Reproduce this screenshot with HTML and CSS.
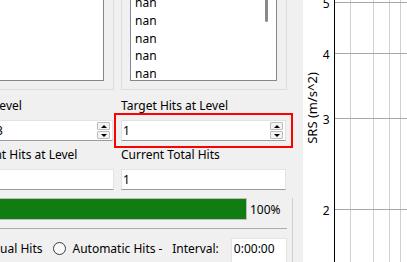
FILE: index.html
```html
<!DOCTYPE html>
<html>

<head>
  <link rel="stylesheet" href="styles.css">
</head>

<body>
  <div class="window">
    <div class="panel">
      <div class="lists">
        <div class="group">
          <div class="listbox"></div>
        </div>
        <div class="group">
          <div class="listbox">
            <div class="list-items">
              <div class="list-item">nan</div>
              <div class="list-item">nan</div>
              <div class="list-item">nan</div>
              <div class="list-item">nan</div>
              <div class="list-item">nan</div>
            </div>
            <div class="scrollbar">
              <div class="scroll-thumb"></div>
            </div>
          </div>
        </div>
      </div>

      <div class="form">
        <div class="field-label">Start Level</div>
        <div class="field-label">Target Hits at Level</div>

        <div class="spinbox narrow">
          <span class="spin-value">3</span>
          <div class="spin-buttons">
            <span class="spin-btn up"></span>
            <span class="spin-btn down"></span>
          </div>
        </div>
        <div class="spinbox highlight">
          <span class="spin-value">1</span>
          <div class="spin-buttons">
            <span class="spin-btn up"></span>
            <span class="spin-btn down"></span>
          </div>
        </div>

        <div class="field-label">Current Hits at Level</div>
        <div class="field-label">Current Total Hits</div>

        <div class="line-edit"></div>
        <div class="line-edit">1</div>
      </div>

      <div class="status">
        <div class="progress-row">
          <div class="progress">
            <div class="progress-fill" style="width: 100%"></div>
          </div>
          <span class="progress-text">100%</span>
        </div>

        <div class="separator"></div>

        <div class="hit-mode">
          <div class="radio-option">
            <span class="radio"></span>
            <span class="option-text">Manual Hits</span>
          </div>
          <div class="radio-option auto">
            <span class="radio"></span>
            <span class="option-text">Automatic Hits -</span>
          </div>
          <span class="option-text interval">Interval:</span>
          <div class="time-edit">0:00:00</div>
        </div>
      </div>
    </div>

    <div class="splitter"></div>

    <div class="plot">
      <svg width="104" height="262" viewBox="0 0 104 262">
        <!-- vertical grid (log frequency) -->
        <line class="grid-minor" x1="47.5" y1="0" x2="47.5" y2="262" />
        <line class="grid-minor" x1="70.5" y1="0" x2="70.5" y2="262" />
        <line class="grid-minor" x1="86.5" y1="0" x2="86.5" y2="262" />
        <line class="grid-minor" x1="97.5" y1="0" x2="97.5" y2="262" />

        <!-- horizontal grid (log SRS) -->
        <line class="grid-major" x1="31" y1="2.5" x2="104" y2="2.5" />
        <line class="grid-major" x1="31" y1="53.5" x2="104" y2="53.5" />
        <line class="grid-major" x1="31" y1="118.5" x2="104" y2="118.5" />
        <line class="grid-major" x1="31" y1="209.5" x2="104" y2="209.5" />

        <line class="axis" x1="31.5" y1="0" x2="31.5" y2="262" />

        <text class="tick" x="26.5" y="3">5</text>
        <text class="tick" x="26.5" y="54">4</text>
        <text class="tick" x="26.5" y="119">3</text>
        <text class="tick" x="26.5" y="210">2</text>

        <text class="axis-label" transform="translate(8.7 108) rotate(-90)">SRS (m/s^2)</text>
      </svg>
    </div>
  </div>
</body>

</html>
```

FILE: styles.css
```css
:root {
  --window: #f0f0f0;
  --field-border: #e3e3e3;
  --field-bottom: #9a9a9a;
  --list-border: #828790;
  --group-border: #dcdcdc;
  --progress: #117c11;
  --highlight: #ff0000;
}

* {
  margin: 0;
  padding: 0;
  box-sizing: border-box;
}

body {
  width: 407px;
  height: 262px;
  overflow: hidden;
  background-color: var(--window);
  color: #000;
  font-family: "Noto Sans", "Open Sans", sans-serif;
  font-size: 12px;
}

.window {
  display: flex;
  height: 262px;
}

.panel {
  width: 293px;
  flex-shrink: 0;
}

/* list group boxes, top of them is scrolled off */
.lists {
  display: grid;
  grid-template-columns: 151px 166px;
  column-gap: 7px;
  margin: -30px 6px 0 -37px;
}

.group {
  height: 120px;
  border: 1px solid var(--group-border);
  padding: 20px 9px 8px 8px;
}

.listbox {
  height: 100%;
  display: flex;
  background-color: #fff;
  border: 1px solid var(--list-border);
  overflow: hidden;
}

.list-items {
  flex: 1;
  padding: 2px 0 0 4px;
}

.list-item {
  line-height: 17.75px;
}

.scrollbar {
  width: 17px;
  padding-left: 6px;
}

.scroll-thumb {
  width: 3px;
  height: 30px;
  background-color: #8a8a8a;
  border-radius: 2px;
}

/* level / hits form */
.form {
  display: grid;
  grid-template-columns: 151px 165px;
  gap: 6px 7px;
  margin: 0 7px 0 -37px;
  padding-top: 8px;
}

.field-label {
  line-height: 16px;
  white-space: nowrap;
}

.line-edit,
.spinbox {
  display: flex;
  height: 21px;
  background-color: #fff;
  border: 1px solid var(--field-border);
  border-bottom-color: var(--field-bottom);
  line-height: 19px;
  padding-left: 1px;
}

.spinbox.narrow {
  justify-self: end;
  width: 119px;
  margin-right: 1px;
}

.spin-value {
  flex: 1;
}

.spin-buttons {
  display: flex;
  flex-direction: column;
  gap: 1px;
  padding: 1px 2px 1px 0;
}

.spin-btn {
  flex: 1;
  width: 13px;
  display: flex;
  align-items: center;
  justify-content: center;
  background-color: #f3f3f3;
  border: 1px solid #bdbdbd;
  border-radius: 1px;
}

.spin-btn::after {
  content: '';
  border-left: 3px solid transparent;
  border-right: 3px solid transparent;
}

.spin-btn.up::after {
  border-bottom: 3px solid #000;
}

.spin-btn.down::after {
  border-top: 3px solid #000;
}

.highlight {
  outline: 2px solid var(--highlight);
  outline-offset: 5px;
}

/* progress + hit mode */
.status {
  margin-left: -44px;
  padding-right: 5px;
  border-right: 1px solid #cfcfcf;
  height: 72px;
}

.progress-row {
  display: flex;
  align-items: flex-start;
  margin: 8px 0 0 7px;
}

.progress {
  flex: 1;
  height: 22px;
  border: 1px solid #bcbcbc;
  background-color: #e6e6e6;
}

.progress-fill {
  height: 100%;
  background-color: var(--progress);
}

.progress-text {
  width: 40px;
  padding: 1px 0 0 3px;
  line-height: 22px;
}

.separator {
  margin-top: 7px;
  border-top: 1px solid #adadad;
}

.hit-mode {
  display: flex;
  align-items: flex-start;
  margin-top: 9px;
}

.radio-option {
  display: flex;
  align-items: flex-start;
  gap: 6px;
  margin-right: 11px;
}

.radio-option.auto {
  margin-right: 9.7px;
}

.radio {
  width: 13px;
  height: 13px;
  margin-top: 4px;
  border: 1px solid #3c3c3c;
  border-radius: 50%;
  background-color: #f9f9f9;
}

.option-text {
  margin-top: 3px;
  line-height: 16px;
  white-space: nowrap;
}

.interval {
  margin-right: 12px;
}

.time-edit {
  width: 56px;
  height: 30px;
  background-color: #fff;
  border: 1px solid var(--field-border);
  padding-left: 2px;
  line-height: 19px;
}

.splitter {
  width: 10px;
  flex-shrink: 0;
}

/* SRS plot */
.plot {
  flex: 1;
  background-color: #fff;
}

.plot svg {
  display: block;
}

.grid-minor {
  stroke: #d0d0d0;
  stroke-width: 1;
}

.grid-major {
  stroke: #a8a8a8;
  stroke-width: 1;
}

.axis {
  stroke: #000;
  stroke-width: 1;
}

.tick {
  font-family: "Noto Sans", sans-serif;
  font-size: 12px;
  text-anchor: end;
  dominant-baseline: central;
}

.axis-label {
  font-family: "Noto Sans", sans-serif;
  font-size: 13px;
  text-anchor: middle;
  dominant-baseline: central;
}
```
